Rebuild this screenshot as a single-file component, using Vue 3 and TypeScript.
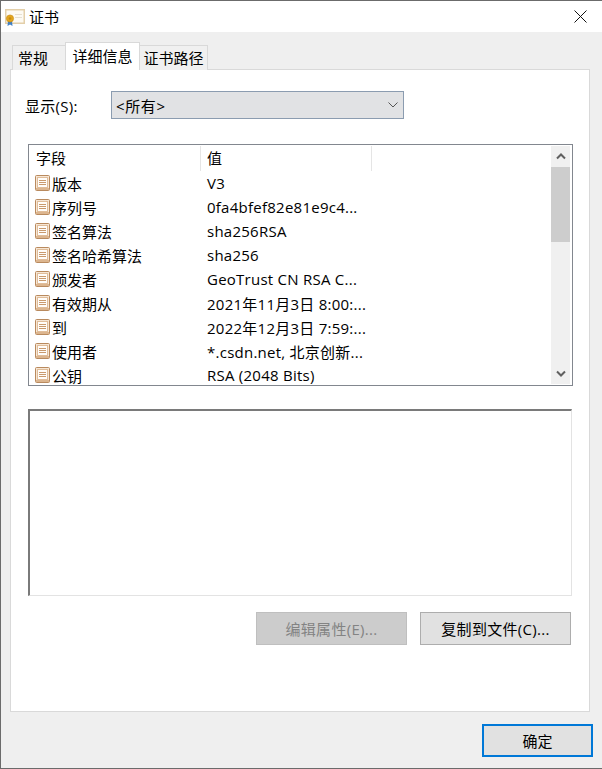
<script setup lang="ts">
interface Row { field: string; value: string }
const rows: Row[] = [
  { field: '版本', value: 'V3' },
  { field: '序列号', value: '0fa4bfef82e81e9c4...' },
  { field: '签名算法', value: 'sha256RSA' },
  { field: '签名哈希算法', value: 'sha256' },
  { field: '颁发者', value: 'GeoTrust CN RSA C...' },
  { field: '有效期从', value: '2021年11月3日 8:00:...' },
  { field: '到', value: '2022年12月3日 7:59:...' },
  { field: '使用者', value: '*.csdn.net, 北京创新...' },
  { field: '公钥', value: 'RSA (2048 Bits)' }
]
</script>

<template>
  <div class="window">
    <header class="titlebar">
      <svg class="cert" width="20" height="17" viewBox="0 0 20 17">
        <rect x="0.75" y="0.75" width="18.5" height="13.5" fill="#fdfaf3" stroke="#e3cfa9" stroke-width="1.5" />
        <rect x="10" y="5" width="7" height="1" fill="#e6e0d2" />
        <rect x="10" y="8" width="7" height="1" fill="#e6e0d2" />
        <path d="M3 12 L2.5 17 L5 15.5 L7.5 17 L7 12 Z" fill="#3f7fc4" />
        <circle cx="5" cy="9.5" r="3.6" fill="#e3a61d" stroke="#c78a12" stroke-width="0.6" />
        <circle cx="5" cy="9.5" r="1.3" fill="#c78a12" />
      </svg>
      <span class="title">证书</span>
      <svg class="close" width="13" height="13" viewBox="0 0 13 13">
        <path d="M0.5 0.5 L12.5 12.5 M12.5 0.5 L0.5 12.5" stroke="#111" stroke-width="1" fill="none" />
      </svg>
    </header>

    <main class="body">
      <nav class="tabs">
        <div class="tab first">常规</div>
        <div class="tab active">详细信息</div>
        <div class="tab last">证书路径</div>
      </nav>

      <section class="panel">
        <div class="show-row">
          <label class="show-label">显示(S):</label>
          <div class="select">
            <span class="select-text">&lt;所有&gt;</span>
            <svg width="10" height="6" viewBox="0 0 10 6">
              <path d="M0.5 0.5 L5 5 L9.5 0.5" stroke="#555" stroke-width="1" fill="none" />
            </svg>
          </div>
        </div>

        <div class="list">
          <div class="list-main">
            <div class="list-head">
              <div class="h-field">字段</div>
              <div class="h-value">值</div>
            </div>
            <div v-for="r in rows" :key="r.field" class="row">
              <div class="c-field">
                <svg class="ficon" width="15" height="16" viewBox="0 0 15 16">
                  <rect x="0.5" y="0.5" width="14" height="15" rx="1" fill="#f6e6d4" stroke="#b98a5e" />
                  <rect x="2.5" y="2.5" width="10" height="10" fill="#fffdfa" stroke="#e0bd9a" />
                  <path d="M4 5.5h7M4 7.5h7M4 9.5h7" stroke="#c99a6e" stroke-width="1" />
                  <rect x="1" y="13" width="13" height="2" fill="#dcb58e" />
                </svg>
                <span>{{ r.field }}</span>
              </div>
              <div class="c-value">{{ r.value }}</div>
            </div>
          </div>
          <div class="scrollbar">
            <div class="arrow">
              <svg width="10" height="7" viewBox="0 0 10 7"><path d="M1 5.5 L5 1.5 L9 5.5" stroke="#606060" stroke-width="2" fill="none" /></svg>
            </div>
            <div class="thumb"></div>
            <div class="track"></div>
            <div class="arrow">
              <svg width="10" height="7" viewBox="0 0 10 7"><path d="M1 1.5 L5 5.5 L9 1.5" stroke="#606060" stroke-width="2" fill="none" /></svg>
            </div>
          </div>
        </div>

        <div class="detail"></div>

        <div class="actions">
          <button class="btn disabled" disabled>编辑属性(E)...</button>
          <button class="btn">复制到文件(C)...</button>
        </div>
      </section>
    </main>

    <footer class="footer">
      <button class="btn ok">确定</button>
    </footer>
  </div>
</template>

<style>
html, body { margin: 0; padding: 0; background: #efefef; }
</style>

<style scoped>
.window {
  width: 602px;
  height: 769px;
  box-sizing: border-box;
  border-top: 1px solid #6b6b6b;
  border-left: 1px solid #6b6b6b;
  border-bottom: 1px solid #6b6b6b;
  background: #efefef;
  display: flex;
  flex-direction: column;
  font-family: "Open Sans", "Noto Sans CJK SC", sans-serif;
  font-size: 15px;
  color: #000;
  overflow: hidden;
}
.titlebar {
  height: 31px;
  flex: none;
  background: #fff;
  display: flex;
  align-items: center;
  padding-left: 4px;
  padding-right: 15px;
}
.cert { margin-top: 2px; }
.title { margin-left: 4px; line-height: 20px; }
.close { margin-left: auto; }
.body {
  flex: none;
  padding: 11px 12px 0 9px;
}
.tabs {
  display: flex;
  align-items: flex-end;
  height: 27px;
  padding-left: 2px;
  position: relative;
  z-index: 1;
  margin-bottom: -1px;
}
.tab {
  box-sizing: border-box;
  height: 25px;
  line-height: 25px;
  text-align: center;
  background: #f0f0f0;
  border: 1px solid #d9d9d9;
  border-bottom: none;
}
.first { width: 53px; border-right: none; text-align: left; padding-left: 5px; }
.active {
  width: 75px;
  height: 28px;
  line-height: 26px;
  background: #fff;
  margin-top: -1px;
}
.last { width: 68px; border-left: none; }
.panel {
  box-sizing: border-box;
  height: 643px;
  background: #fff;
  border: 1px solid #d9d9d9;
  padding: 21px 16px 0 17px;
}
.show-row {
  display: flex;
  align-items: center;
  height: 28px;
}
.show-label { width: 86px; margin-left: -3px; flex: none; letter-spacing: 0.3px; }
.select {
  box-sizing: border-box;
  width: 293px;
  height: 28px;
  background: #e1e2e4;
  border: 1px solid #8b9cb0;
  display: flex;
  align-items: center;
  justify-content: space-between;
  padding: 0 5px 0 4px;
}
.select-text { letter-spacing: 0.6px; }
.list {
  box-sizing: border-box;
  width: 545px;
  height: 242px;
  margin-top: 25px;
  border: 1px solid #82878f;
  display: flex;
  padding: 1px 2px 1px 0;
}
.list-main { flex: 1; min-width: 0; }
.list-head {
  display: flex;
  height: 25px;
  line-height: 25px;
}
.h-field {
  width: 172px;
  box-sizing: border-box;
  padding-left: 7px;
  border-right: 1px solid #e5e5e5;
}
.h-value {
  width: 171px;
  box-sizing: border-box;
  padding-left: 6px;
  border-right: 1px solid #e5e5e5;
}
.row {
  display: flex;
  height: 24px;
  align-items: center;
}
.c-field {
  width: 172px;
  flex: none;
  display: flex;
  align-items: center;
  padding-left: 6px;
  box-sizing: border-box;
}
.ficon { margin-right: 2px; flex: none; }
.c-value { padding-left: 6px; white-space: nowrap; letter-spacing: 0.25px; }
.scrollbar {
  width: 19px;
  flex: none;
  background: #f0f0f0;
  display: flex;
  flex-direction: column;
}
.arrow {
  height: 21px;
  flex: none;
  display: flex;
  align-items: center;
  justify-content: center;
}
.thumb { height: 75px; flex: none; background: #cdcdcd; }
.track { flex: 1; }
.detail {
  box-sizing: border-box;
  width: 544px;
  height: 187px;
  margin-top: 23px;
  border-top: 2px solid #7a7a7a;
  border-left: 2px solid #7a7a7a;
  border-right: 1px solid #e3e3e3;
  border-bottom: 1px solid #e3e3e3;
}
.actions {
  display: flex;
  justify-content: flex-end;
  gap: 13px;
  width: 543px;
  margin-top: 16px;
}
.btn {
  box-sizing: border-box;
  width: 151px;
  height: 33px;
  font: inherit;
  letter-spacing: 0.3px;
  color: #000;
  background: #e1e1e1;
  border: 1px solid #adadad;
  padding: 0;
}
.disabled {
  background: #cccccc;
  border-color: #bfbfbf;
  color: #838383;
}
.footer {
  display: flex;
  justify-content: flex-end;
  padding: 12px 9px 0 0;
}
.ok {
  width: 111px;
  height: 33px;
  border: 2px solid #0078d7;
  letter-spacing: 0;
}
</style>
